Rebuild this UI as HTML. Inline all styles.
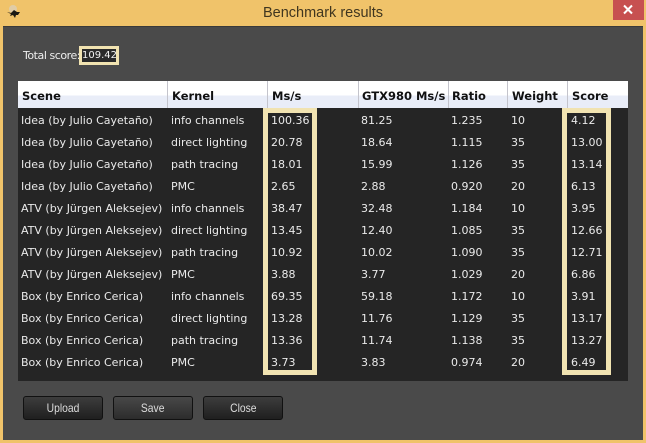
<!DOCTYPE html>
<html>
<head>
<meta charset="utf-8">
<style>
html,body{margin:0;padding:0}
body{width:646px;height:443px;overflow:hidden;position:relative;background:#f0c36a;font-family:"DejaVu Sans",sans-serif}
.a{position:absolute;white-space:nowrap}
#title{left:0;width:646px;top:4px;text-align:center;font:14.5px/18px "Liberation Sans",sans-serif;color:#40361f}
#close{left:613px;top:0;width:31px;height:20px;background:#c75050}
#win{left:3px;top:26px;width:640px;height:414px;background:#4a4a4a;box-shadow:inset 0 1px 0 #3a3a3a}
#total{left:23px;top:49px;font:11px/14px "DejaVu Sans",sans-serif;letter-spacing:-.45px;color:#eee}
#tbox{left:79px;top:46px;width:34px;height:13px;border:3px solid #f1e3b1;background:#2a2a2a;color:#f2f2f2;font:10px/13px "DejaVu Sans",sans-serif;text-align:center}
#head{left:18px;top:81px;width:610px;height:27px;background:linear-gradient(#fff 0,#fff 14px,#e9edf8 15px,#e9edf8 27px)}
#body{left:18px;top:108px;width:610px;height:273px;background:#252525}
.sep{top:81px;width:1px;height:27px;background:#c4c4cc}
.h{top:89px;font:bold 11.5px/15px "DejaVu Sans",sans-serif;color:#111}
.r{left:0;width:646px;height:14px}
.r span{position:absolute;top:0;font:11px/14px "DejaVu Sans",sans-serif;color:#eaeaea;white-space:nowrap}
.r span:nth-child(1){left:21px}
.r span:nth-child(2){left:171px}
.r span:nth-child(3){left:271px}
.r span:nth-child(4){left:361px}
.r span:nth-child(5){left:451px}
.r span:nth-child(6){left:511px}
.r span:nth-child(7){left:571px}
.hl{top:108px;height:257px;border:5px solid #f1e3b1;box-sizing:content-box}
.b{top:396px;width:78px;height:22px;border:1px solid #111;border-radius:3px;background:linear-gradient(#3d3d3d,#1f1f1f);color:#ddd;font:12px/22px "Liberation Sans",sans-serif;text-align:center}
.b i{font-style:normal;display:inline-block;transform:scaleX(.86)}
</style>
</head>
<body>
<div class="a" id="title">Benchmark results</div>
<div class="a" id="close"><svg width="31" height="20"><path d="M11 5.5l8 8M19 5.5l-8 8" stroke="#fff" stroke-width="2"/></svg></div>
<svg class="a" style="left:6px;top:3px" width="16" height="18" viewBox="0 0 16 18"><circle cx="7" cy="6" r="4" fill="#d8d0c0" opacity=".7"/><path d="M1 9l4 1 3-3 3 2 3 0-2 3-2 0-1 3-2-3-3 1 1-2z" fill="#1c1a14"/></svg>
<div class="a" id="win"></div>
<div class="a" id="total">Total score:</div>
<div class="a" id="tbox">109.42</div>
<div class="a" id="head"></div>
<div class="a" id="body"></div>
<div class="a sep" style="left:167px"></div>
<div class="a sep" style="left:267px"></div>
<div class="a sep" style="left:358px"></div>
<div class="a sep" style="left:448px"></div>
<div class="a sep" style="left:507px"></div>
<div class="a sep" style="left:567px"></div>
<div class="a h" style="left:22px">Scene</div>
<div class="a h" style="left:172px">Kernel</div>
<div class="a h" style="left:272px">Ms/s</div>
<div class="a h" style="left:362px">GTX980 Ms/s</div>
<div class="a h" style="left:452px">Ratio</div>
<div class="a h" style="left:512px">Weight</div>
<div class="a h" style="left:572px">Score</div>
<div class="a hl" style="left:263px;width:44px"></div>
<div class="a hl" style="left:562px;width:39px"></div>

<div class="a r" style="top:114px"><span>Idea (by Julio Cayetaño)</span><span>info channels</span><span>100.36</span><span>81.25</span><span>1.235</span><span>10</span><span>4.12</span></div>
<div class="a r" style="top:136px"><span>Idea (by Julio Cayetaño)</span><span>direct lighting</span><span>20.78</span><span>18.64</span><span>1.115</span><span>35</span><span>13.00</span></div>
<div class="a r" style="top:158px"><span>Idea (by Julio Cayetaño)</span><span>path tracing</span><span>18.01</span><span>15.99</span><span>1.126</span><span>35</span><span>13.14</span></div>
<div class="a r" style="top:180px"><span>Idea (by Julio Cayetaño)</span><span>PMC</span><span>2.65</span><span>2.88</span><span>0.920</span><span>20</span><span>6.13</span></div>
<div class="a r" style="top:202px"><span>ATV (by Jürgen Aleksejev)</span><span>info channels</span><span>38.47</span><span>32.48</span><span>1.184</span><span>10</span><span>3.95</span></div>
<div class="a r" style="top:224px"><span>ATV (by Jürgen Aleksejev)</span><span>direct lighting</span><span>13.45</span><span>12.40</span><span>1.085</span><span>35</span><span>12.66</span></div>
<div class="a r" style="top:246px"><span>ATV (by Jürgen Aleksejev)</span><span>path tracing</span><span>10.92</span><span>10.02</span><span>1.090</span><span>35</span><span>12.71</span></div>
<div class="a r" style="top:268px"><span>ATV (by Jürgen Aleksejev)</span><span>PMC</span><span>3.88</span><span>3.77</span><span>1.029</span><span>20</span><span>6.86</span></div>
<div class="a r" style="top:290px"><span>Box (by Enrico Cerica)</span><span>info channels</span><span>69.35</span><span>59.18</span><span>1.172</span><span>10</span><span>3.91</span></div>
<div class="a r" style="top:312px"><span>Box (by Enrico Cerica)</span><span>direct lighting</span><span>13.28</span><span>11.76</span><span>1.129</span><span>35</span><span>13.17</span></div>
<div class="a r" style="top:334px"><span>Box (by Enrico Cerica)</span><span>path tracing</span><span>13.36</span><span>11.74</span><span>1.138</span><span>35</span><span>13.27</span></div>
<div class="a r" style="top:356px"><span>Box (by Enrico Cerica)</span><span>PMC</span><span>3.73</span><span>3.83</span><span>0.974</span><span>20</span><span>6.49</span></div>

<div class="a b" style="left:23px"><i>Upload</i></div>
<div class="a b" style="left:113px;background:linear-gradient(#484848,#2c2c2c)"><i>Save</i></div>
<div class="a b" style="left:203px"><i>Close</i></div>
</body>
</html>
